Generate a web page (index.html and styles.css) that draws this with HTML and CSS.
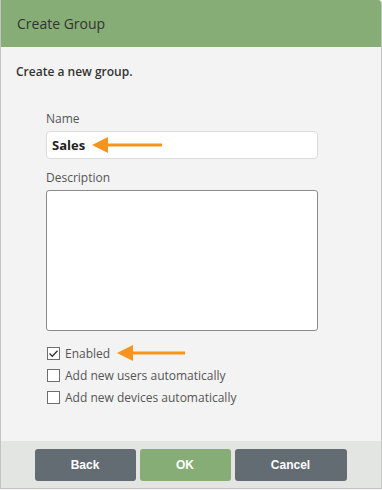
FILE: index.html
```html
<!DOCTYPE html>
<html lang="en">
<head>
    <meta charset="UTF-8">
    <meta name="viewport" content="width=device-width, initial-scale=1.0">
    <title>Create Group</title>
    <link rel="stylesheet" href="styles.css">
</head>
<body>
    <div class="dialog">
        <div class="dialog-header">Create Group</div>

        <div class="dialog-body">
            <p class="intro">Create a new group.</p>

            <div class="form">
                <label class="field-label" for="name">Name</label>
                <div class="name-input">
                    <span class="name-value">Sales</span>
                    <svg class="arrow" width="70" height="16" viewBox="0 0 70 16">
                        <polygon points="0,8 16,0 16,16" fill="#f7941d"/>
                        <rect x="14" y="6.5" width="56" height="3" fill="#f7941d"/>
                    </svg>
                </div>

                <label class="field-label" for="description">Description</label>
                <div class="textarea" id="description"></div>

                <div class="checks">
                    <div class="check-row">
                        <span class="box checked">
                            <svg width="11" height="11" viewBox="0 0 11 11"><path d="M1.5 5.5 L4.3 8.3 L9.5 2.8" fill="none" stroke="#333" stroke-width="1.3"/></svg>
                        </span>
                        <span>Enabled</span>
                        <svg class="arrow" width="68" height="16" viewBox="0 0 68 16">
                            <polygon points="0,8 16,0 16,16" fill="#f7941d"/>
                            <rect x="14" y="6.5" width="54" height="3" fill="#f7941d"/>
                        </svg>
                    </div>
                    <div class="check-row">
                        <span class="box"></span>
                        <span>Add new users automatically</span>
                    </div>
                    <div class="check-row">
                        <span class="box"></span>
                        <span>Add new devices automatically</span>
                    </div>
                </div>
            </div>
        </div>

        <div class="dialog-footer">
            <button class="btn btn-dark btn-back">Back</button>
            <button class="btn btn-green btn-ok">OK</button>
            <button class="btn btn-dark btn-cancel">Cancel</button>
        </div>
    </div>
</body>
</html>
```

FILE: styles.css
```css
body {
    margin: 0;
    padding: 0;
    font-family: 'Open Sans', sans-serif;
    background: #f3f3f3;
}
.dialog {
    width: 380px;
    height: 488px;
    border: 1px solid #c4c4c4;
    border-top: none;
    border-radius: 0 4px 0 0;
    background: #f3f3f3;
    display: flex;
    flex-direction: column;
    overflow: hidden;
}
.dialog-header {
    height: 47px;
    background: #86ad76;
    color: #333;
    font-size: 14px;
    line-height: 47px;
    padding-left: 16px;
}
.dialog-body {
    flex: 1;
    padding: 0 15px;
}
.intro {
    margin: 15px 0 0;
    font-size: 12px;
    font-weight: 600;
    color: #333;
    line-height: 20px;
}
.form {
    padding: 0 48px 0 30px;
    margin-top: 28px;
}
.field-label {
    display: block;
    font-size: 12px;
    color: #555;
    line-height: 18px;
}
.name-input {
    height: 26px;
    margin-top: 3px;
    margin-bottom: 10px;
    background: #fff;
    border: 1px solid #dcdcdc;
    border-radius: 4px;
    display: flex;
    align-items: center;
    padding-left: 5px;
}
.name-value {
    font-size: 13px;
    font-weight: 700;
    color: #222;
}
.arrow {
    display: block;
    margin-left: 7px;
}
.textarea {
    height: 139px;
    margin-top: 3px;
    background: #fff;
    border: 1px solid #8a8a8a;
    border-radius: 3px;
}
.checks {
    margin-top: 13px;
    display: flex;
    flex-direction: column;
    gap: 4px;
}
.check-row {
    display: flex;
    align-items: center;
    height: 18px;
    font-size: 12px;
    color: #555;
}
.box {
    width: 11px;
    height: 11px;
    border: 1px solid #6e6e6e;
    background: #fff;
    margin: 0 5px 0 1px;
    display: flex;
    align-items: center;
    justify-content: center;
}
.dialog-footer {
    height: 47px;
    background: #e3e5e3;
    display: flex;
    align-items: center;
    justify-content: center;
    gap: 4px;
    padding-right: 1px;
}
.btn {
    height: 32px;
    border: none;
    border-radius: 3px;
    color: #fff;
    font-family: 'Liberation Sans', Arial, sans-serif;
    font-size: 12px;
    font-weight: 700;
    cursor: pointer;
}
.btn-dark {
    background: #636b73;
}
.btn-green {
    background: #86ad76;
}
.btn-back {
    width: 101px;
}
.btn-ok {
    width: 91px;
}
.btn-cancel {
    width: 112px;
}
```
